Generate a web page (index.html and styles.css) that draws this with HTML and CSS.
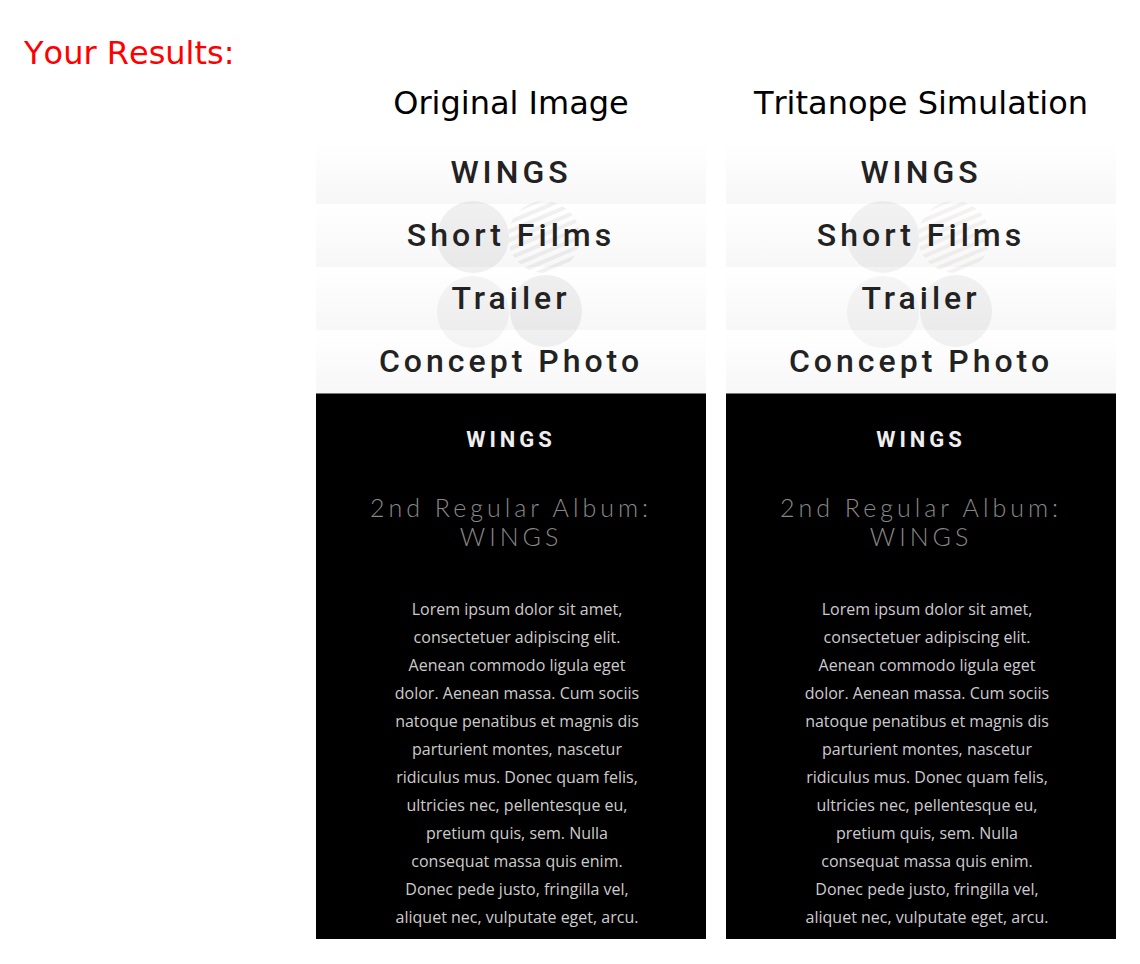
FILE: index.html
```html
<!DOCTYPE html>
<html lang="en">
<head>
<meta charset="utf-8">
<meta name="viewport" content="width=device-width, initial-scale=1">
<title>Your Results</title>
<link rel="stylesheet" href="styles.css">
</head>
<body>
<main class="results">
  <h1 class="results-title">Your Results:</h1>
  <div class="comparison">
    <section class="result">
      <h2 class="result-title">Original Image</h2>
      <article class="preview">
        <nav class="menu">
          <svg class="menu-logo" viewBox="0 0 150 150" aria-hidden="true">
            <defs>
              <clipPath id="disc-a"><circle cx="109" cy="37" r="36"/></clipPath>
            </defs>
            <circle cx="38" cy="37" r="36" fill="#f0f0f0"/>
            <g clip-path="url(#disc-a)" stroke="#f1f1f1" stroke-width="4">
              <path d="M70 15l80-34M70 24l80-34M70 33l80-34M70 42l80-34M70 51l80-34M70 60l80-34M70 69l80-34M70 78l80-34M70 87l80-34M70 96l80-34M70 105l80-34"/>
            </g>
            <circle cx="38" cy="112" r="36" fill="#f5f5f5"/>
            <circle cx="111" cy="111" r="36" fill="#f0f0f0"/>
          </svg>
          <a class="menu-link" href="#">WINGS</a>
          <a class="menu-link" href="#">Short Films</a>
          <a class="menu-link" href="#">Trailer</a>
          <a class="menu-link" href="#">Concept Photo</a>
        </nav>
        <div class="album">
          <h3 class="album-name">WINGS</h3>
          <h4 class="album-heading">2nd Regular Album:<br>WINGS</h4>
          <p class="album-text">Lorem ipsum dolor sit amet,<br>consectetuer adipiscing elit.<br>Aenean commodo ligula eget<br>dolor. Aenean massa. Cum sociis<br>natoque penatibus et magnis dis<br>parturient montes, nascetur<br>ridiculus mus. Donec quam felis,<br>ultricies nec, pellentesque eu,<br>pretium quis, sem. Nulla<br>consequat massa quis enim.<br>Donec pede justo, fringilla vel,<br>aliquet nec, vulputate eget, arcu.</p>
        </div>
      </article>
    </section>
    <section class="result">
      <h2 class="result-title">Tritanope Simulation</h2>
      <article class="preview preview-tritanope">
        <nav class="menu">
          <svg class="menu-logo" viewBox="0 0 150 150" aria-hidden="true">
            <defs>
              <clipPath id="disc-b"><circle cx="109" cy="37" r="36"/></clipPath>
            </defs>
            <circle cx="38" cy="37" r="36" fill="#f2f2f2"/>
            <g clip-path="url(#disc-b)" stroke="#f4f3f2" stroke-width="4">
              <path d="M70 15l80-34M70 24l80-34M70 33l80-34M70 42l80-34M70 51l80-34M70 60l80-34M70 69l80-34M70 78l80-34M70 87l80-34M70 96l80-34M70 105l80-34"/>
            </g>
            <circle cx="38" cy="112" r="36" fill="#f6f6f6"/>
            <circle cx="111" cy="111" r="36" fill="#f2f2f2"/>
          </svg>
          <a class="menu-link" href="#">WINGS</a>
          <a class="menu-link" href="#">Short Films</a>
          <a class="menu-link" href="#">Trailer</a>
          <a class="menu-link" href="#">Concept Photo</a>
        </nav>
        <div class="album">
          <h3 class="album-name">WINGS</h3>
          <h4 class="album-heading">2nd Regular Album:<br>WINGS</h4>
          <p class="album-text">Lorem ipsum dolor sit amet,<br>consectetuer adipiscing elit.<br>Aenean commodo ligula eget<br>dolor. Aenean massa. Cum sociis<br>natoque penatibus et magnis dis<br>parturient montes, nascetur<br>ridiculus mus. Donec quam felis,<br>ultricies nec, pellentesque eu,<br>pretium quis, sem. Nulla<br>consequat massa quis enim.<br>Donec pede justo, fringilla vel,<br>aliquet nec, vulputate eget, arcu.</p>
        </div>
      </article>
    </section>
  </div>
</main>
</body>
</html>
```
FILE: styles.css
```css
* {
  box-sizing: border-box;
}

body {
  margin: 0;
  background: #fff;
  color: #000;
  font-family: Verdana, "DejaVu Sans", sans-serif;
}

.results {
  padding: 33px 24px 24px;
}

.results-title,
.result-title {
  margin: 0;
  font-size: 32px;
  font-weight: 400;
  font-kerning: none;
  line-height: 40px;
  white-space: nowrap;
}

.results-title {
  color: #f00;
}

.comparison {
  display: grid;
  grid-template-columns: 1fr 1fr;
  gap: 20px;
  margin-left: 292px;
  padding-top: 10px;
}

.result-title {
  display: flex;
  justify-content: center;
  margin-bottom: 18px;
}

.menu {
  position: relative;
  border-bottom: 1px solid #777;
}

.menu-logo {
  position: absolute;
  top: 59px;
  left: 50%;
  width: 150px;
  margin-left: -76px;
}

.menu-link {
  display: block;
  background: linear-gradient(rgba(0, 0, 0, 0), rgba(0, 0, 0, 0.03));
  color: #222;
  font-family: Roboto, sans-serif;
  font-size: 32px;
  font-weight: 500;
  line-height: 63px;
  letter-spacing: 4px;
  text-align: center;
  text-decoration: none;
  position: relative;
}

.album {
  padding: 32px 16px 8px;
  background: #000;
  text-align: center;
}

.album-name {
  margin: 0;
  color: #eee;
  font-family: Roboto, sans-serif;
  font-size: 22px;
  font-weight: 700;
  line-height: 28px;
  letter-spacing: 4px;
}

.album-heading {
  margin: 39px 0 44px;
  color: #888;
  font-family: Lato, sans-serif;
  font-size: 25px;
  font-weight: 300;
  line-height: 29px;
  letter-spacing: 4px;
}

.album-text {
  margin: 0;
  padding-left: 12px;
  color: #ccc;
  font-family: "Open Sans", sans-serif;
  font-size: 16px;
  line-height: 28px;
}

.preview-tritanope .album-text {
  color: #cccbd2;
}
```
